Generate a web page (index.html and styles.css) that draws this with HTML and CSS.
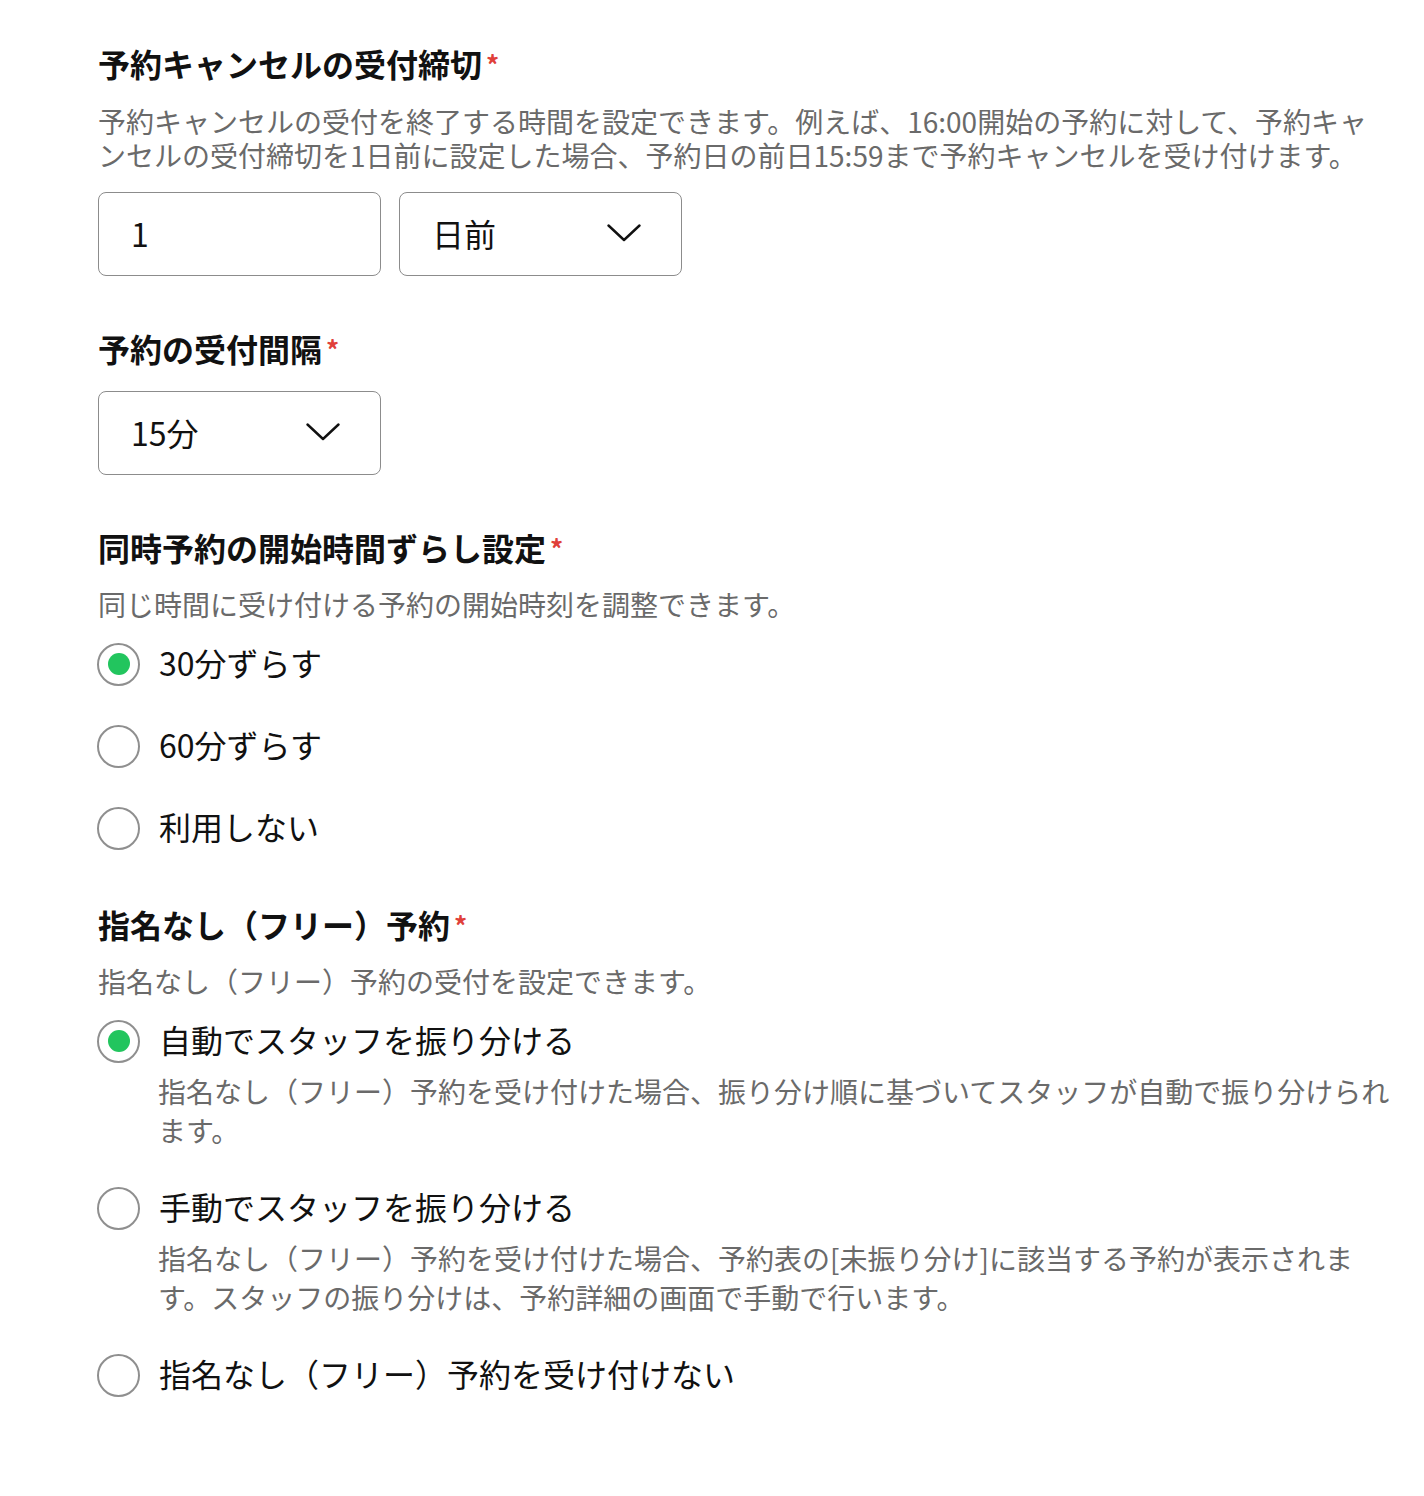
FILE: index.html
```html
<!DOCTYPE html>
<html lang="ja">
<head>
<meta charset="utf-8">
<link rel="stylesheet" href="styles.css">
</head>
<body>
<main class="form">
  <section class="field field-cancel">
    <h2 class="label">予約キャンセルの受付締切<span class="req">*</span></h2>
    <p class="help">予約キャンセルの受付を終了する時間を設定できます。例えば、16:00開始の予約に対して、予約キャンセルの受付締切を1日前に設定した場合、予約日の前日15:59まで予約キャンセルを受け付けます。</p>
    <div class="controls">
      <div class="box">1</div>
      <div class="box select">日前<svg class="chev" width="34" height="18" viewBox="0 0 34 18"><path d="M1.5 1.5 L17 16 L32.5 1.5" fill="none" stroke="#111" stroke-width="2.4" stroke-linecap="round" stroke-linejoin="round"/></svg></div>
    </div>
  </section>

  <section class="field field-interval">
    <h2 class="label">予約の受付間隔<span class="req">*</span></h2>
    <div class="controls">
      <div class="box select">15分<svg class="chev" width="34" height="18" viewBox="0 0 34 18"><path d="M1.5 1.5 L17 16 L32.5 1.5" fill="none" stroke="#111" stroke-width="2.4" stroke-linecap="round" stroke-linejoin="round"/></svg></div>
    </div>
  </section>

  <section class="field field-shift">
    <h2 class="label">同時予約の開始時間ずらし設定<span class="req">*</span></h2>
    <p class="help one">同じ時間に受け付ける予約の開始時刻を調整できます。</p>
    <div class="radios">
      <div class="radio"><span class="dot on"></span><span class="rtext">30分ずらす</span></div>
      <div class="radio"><span class="dot"></span><span class="rtext">60分ずらす</span></div>
      <div class="radio"><span class="dot"></span><span class="rtext">利用しない</span></div>
    </div>
  </section>

  <section class="field field-free">
    <h2 class="label">指名なし（フリー）予約<span class="req">*</span></h2>
    <p class="help one">指名なし（フリー）予約の受付を設定できます。</p>
    <div class="radios wide">
      <div class="ropt">
        <div class="radio"><span class="dot on"></span><span class="rtext">自動でスタッフを振り分ける</span></div>
        <p class="rhelp">指名なし（フリー）予約を受け付けた場合、振り分け順に基づいてスタッフが自動で振り分けられます。</p>
      </div>
      <div class="ropt">
        <div class="radio"><span class="dot"></span><span class="rtext">手動でスタッフを振り分ける</span></div>
        <p class="rhelp">指名なし（フリー）予約を受け付けた場合、予約表の[未振り分け]に該当する予約が表示されます。スタッフの振り分けは、予約詳細の画面で手動で行います。</p>
      </div>
      <div class="ropt">
        <div class="radio"><span class="dot"></span><span class="rtext">指名なし（フリー）予約を受け付けない</span></div>
      </div>
    </div>
  </section>
</main>
</body>
</html>
```

FILE: styles.css
```css
html, body {
  margin: 0;
  padding: 0;
  background: #fff;
}
body {
  font-family: "Noto Sans CJK JP", "Noto Sans", sans-serif;
  color: #111;
}
.form {
  width: 1292px;
  padding: 43px 0 60px 98px;
}
.field {
  margin: 0 0 52px 0;
}
.label {
  margin: 0;
  font-size: 32px;
  line-height: 40px;
  padding-bottom: 4px;
  font-weight: 700;
  color: #111;
  display: flex;
  align-items: flex-start;
}
.req {
  color: #e0403a;
  font-size: 26px;
  line-height: 26px;
  font-weight: 700;
  margin-left: 4px;
  margin-top: 8px;
}
.help {
  margin: 17px 0 0 0;
  font-size: 28px;
  line-height: 34px;
  color: #6a6a6a;
}
.help.one {
  margin-top: 16px;
}
.controls {
  display: flex;
  gap: 18px;
  margin-top: 20px;
}
.field-interval .controls {
  margin-top: 19px;
}
.box {
  box-sizing: border-box;
  width: 283px;
  height: 84px;
  border: 1.5px solid #8c8c8c;
  border-radius: 8px;
  display: flex;
  align-items: center;
  justify-content: space-between;
  padding: 0 40px 2px 32px;
  font-size: 32px;
  color: #111;
}
.chev {
  display: block;
}
.radios {
  display: flex;
  flex-direction: column;
  gap: 38px;
  margin-top: 21px;
}
.radios.wide {
  gap: 36px;
}
.radio {
  display: flex;
  align-items: center;
  gap: 19px;
  height: 44px;
}
.dot {
  box-sizing: border-box;
  width: 43px;
  height: 43px;
  border-radius: 50%;
  border: 2px solid #8f8f8f;
  margin-left: -1px;
  display: flex;
  align-items: center;
  justify-content: center;
  flex: none;
}
.dot.on::after {
  content: "";
  width: 22px;
  height: 22px;
  border-radius: 50%;
  background: #22c55e;
}
.rtext {
  font-size: 32px;
  line-height: 40px;
  padding-bottom: 4px;
  color: #111;
}
.rhelp {
  margin: 9px 0 0 60px;
  font-size: 28px;
  line-height: 39px;
  color: #6a6a6a;
}
.field-shift {
  margin-bottom: 54px;
}
```
